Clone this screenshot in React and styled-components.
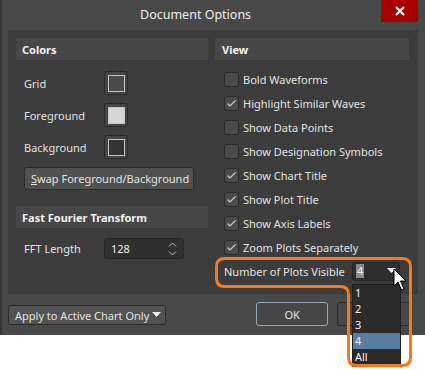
import React from "react";
import styled, { createGlobalStyle } from "styled-components";

const GlobalStyle = createGlobalStyle`
  body {
    margin: 0;
    background: #ffffff;
    font-family: "Noto Sans", "Open Sans", sans-serif;
    font-size: 11px;
    white-space: nowrap;
  }
`;

const Stage = styled.div`
  position: relative;
  width: 425px;
  height: 370px;
  overflow: hidden;
`;

const Dialog = styled.div`
  width: 425px;
  height: 335px;
  background: #484848;
  border-left: 2px solid #353535;
  box-sizing: border-box;
  color: #e2e2e2;
`;

const TitleBar = styled.div`
  height: 30px;
  display: flex;
  align-items: flex-start;
`;

const Title = styled.div`
  margin-left: 138px;
  margin-top: 6px;
  font-size: 12.5px;
  color: #ececec;
`;

const CloseButton = styled.div`
  margin-left: auto;
  margin-right: 7px;
  width: 37px;
  height: 22px;
  background: #a80000;
  display: flex;
  align-items: center;
  justify-content: center;
`;

const Body = styled.div`
  padding: 0 7px 0 6px;
`;

const Panel = styled.div`
  height: 264px;
  box-sizing: border-box;
  background: #3c3c3c;
  padding: 8px 7px 0 8px;
  display: grid;
  grid-template-columns: 192px 194px;
  column-gap: 7px;
  align-items: start;
`;

const Column = styled.div`
  display: flex;
  flex-direction: column;
`;

const GroupHeader = styled.div`
  height: 22px;
  background: #474747;
  display: flex;
  align-items: center;
  padding-left: ${(p) => p.$indent || 6}px;
  font-weight: bold;
  color: #f2f2f2;
  margin-top: ${(p) => p.$top || 0}px;
`;

const ColorRows = styled.div`
  display: flex;
  flex-direction: column;
  gap: 8px;
  padding: 11px 0 0 8px;
`;

const Row = styled.div`
  display: flex;
  align-items: center;
  height: 24px;
`;

const Label = styled.div`
  width: 80px;
`;

const Swatch = styled.div`
  width: 24px;
  height: 24px;
  box-sizing: border-box;
  border: 1px solid #2a2a2a;
  border-radius: 3px;
  background: #454545;
  display: flex;
  align-items: center;
  justify-content: center;
`;

const SwatchFill = styled.div`
  width: 17px;
  height: 17px;
  box-sizing: border-box;
  border: 1px solid #c4c4c4;
  background: ${(p) => p.$color};
`;

const Button = styled.div`
  height: 23px;
  box-sizing: border-box;
  border: 1px solid #2b2b2b;
  border-radius: 3px;
  background: #505050;
  display: flex;
  align-items: center;
  padding: 0 6px;
  width: ${(p) => p.$width}px;
`;

const Underline = styled.span`
  text-decoration: underline;
`;

const FftRow = styled.div`
  display: flex;
  align-items: center;
  padding: 10px 0 0 8px;
`;

const NumberInput = styled.div`
  width: 80px;
  height: 21px;
  box-sizing: border-box;
  border: 1px solid #262626;
  border-radius: 3px;
  background: #2f2f2f;
  display: flex;
  align-items: center;
  justify-content: space-between;
  padding: 0 6px 0 6px;
  color: #eeeeee;
`;

const CheckList = styled.div`
  display: flex;
  flex-direction: column;
  padding: 7px 0 0 9px;
`;

const Box = styled.div`
  width: 15px;
  height: 15px;
  box-sizing: border-box;
  border: 1px solid #2a2a2a;
  border-radius: 3px;
  background: #4a4a4a;
  margin-right: 4px;
  display: flex;
  align-items: center;
  justify-content: center;
`;

const PlotsLabel = styled.div`
  width: 128px;
`;

const SelectWrap = styled.div`
  position: relative;
`;

const Select = styled.div`
  width: 48px;
  height: 19px;
  box-sizing: border-box;
  border: 1px solid #262626;
  border-radius: 3px;
  background: #2e2e2e;
  display: flex;
  align-items: center;
  justify-content: space-between;
  padding: 0 3px 0 3px;
`;

const SelectedValue = styled.span`
  background: #8a8a8a;
  color: #f4f4f4;
  padding: 0 1px;
  line-height: 14px;
`;

const DropList = styled.div`
  position: absolute;
  top: 22px;
  left: 0;
  width: 49px;
  box-sizing: border-box;
  background: #2b2b2b;
  border: 1px solid #1e1e1e;
  padding: 0 0 1px;
  z-index: 3;
`;

const DropItem = styled.div`
  height: 16px;
  display: flex;
  align-items: center;
  line-height: 13px;
  padding-left: 2px;
  font-size: 11px;
  color: #f0f0f0;
  background: ${(p) => (p.$active ? "#5a7ea3" : "transparent")};
`;

const Footer = styled.div`
  display: flex;
  align-items: center;
  height: 40px;
  padding-right: 8px;
`;

const ApplyButton = styled(Button)`
  height: 20px;
  justify-content: space-between;
  background: #525252;
  padding: 0 4px 0 6px;
  margin-top: 2px;
`;

const DialogButton = styled.div`
  width: 74px;
  height: 24px;
  box-sizing: border-box;
  border: 1px solid ${(p) => (p.$focus ? "#8fa8bd" : "#2b2b2b")};
  border-radius: 3px;
  background: #474747;
  display: flex;
  align-items: center;
  justify-content: center;
  margin-left: ${(p) => p.$gap}px;
`;

const Overlay = styled.svg`
  position: absolute;
  left: 0;
  top: 0;
  pointer-events: none;
  z-index: 5;
`;

const Check = () => (
  <svg width="11" height="9" viewBox="0 0 11 9">
    <polyline points="1.5,4.5 4,7 9.5,1.5" fill="none" stroke="#cfcfcf" strokeWidth="1.2" />
  </svg>
);

const Triangle = () => (
  <svg width="9" height="6" viewBox="0 0 9 6">
    <polygon points="0,0 9,0 4.5,5" fill="#f4f4f4" />
  </svg>
);

const Spinner = () => (
  <svg width="9" height="14" viewBox="0 0 9 14">
    <polyline points="1,4.5 4.5,1 8,4.5" fill="none" stroke="#bdbdbd" strokeWidth="1" />
    <polyline points="1,9.5 4.5,13 8,9.5" fill="none" stroke="#bdbdbd" strokeWidth="1" />
  </svg>
);

const views = [
  ["Bold Waveforms", false],
  ["Highlight Similar Waves", true],
  ["Show Data Points", false],
  ["Show Designation Symbols", false],
  ["Show Chart Title", true],
  ["Show Plot Title", true],
  ["Show Axis Labels", true],
  ["Zoom Plots Separately", true],
];

const swatches = [
  ["Grid", "#4a4a4a"],
  ["Foreground", "#d6d6d6"],
  ["Background", "#333333"],
];

export default function App() {
  return (
    <Stage>
      <GlobalStyle />
      <Dialog>
        <TitleBar>
          <Title>Document Options</Title>
          <CloseButton>
            <svg width="10" height="10" viewBox="0 0 10 10">
              <path d="M1 1 L9 9 M9 1 L1 9" stroke="#ffffff" strokeWidth="2.2" />
            </svg>
          </CloseButton>
        </TitleBar>
        <Body>
          <Panel>
            <Column>
              <GroupHeader>Colors</GroupHeader>
              <ColorRows>
                {swatches.map(([name, color]) => (
                  <Row key={name}>
                    <Label>{name}</Label>
                    <Swatch>
                      <SwatchFill $color={color} />
                    </Swatch>
                  </Row>
                ))}
                <Button $width={170}>
                  <Underline>S</Underline>wap Foreground/Background
                </Button>
              </ColorRows>
              <GroupHeader $top={16}>Fast Fourier Transform</GroupHeader>
              <FftRow>
                <Label>FFT Length</Label>
                <NumberInput>
                  128
                  <Spinner />
                </NumberInput>
              </FftRow>
            </Column>
            <Column>
              <GroupHeader $indent={7}>View</GroupHeader>
              <CheckList>
                {views.map(([name, on]) => (
                  <Row key={name}>
                    <Box>{on && <Check />}</Box>
                    {name}
                  </Row>
                ))}
                <Row>
                  <PlotsLabel>Number of Plots Visible</PlotsLabel>
                  <SelectWrap>
                    <Select>
                      <SelectedValue>4</SelectedValue>
                      <Triangle />
                    </Select>
                    <DropList>
                      {["1", "2", "3", "4", "All"].map((v) => (
                        <DropItem key={v} $active={v === "4"}>
                          {v}
                        </DropItem>
                      ))}
                    </DropList>
                  </SelectWrap>
                </Row>
              </CheckList>
            </Column>
          </Panel>
          <Footer>
            <ApplyButton $width={161}>
              Apply to Active Chart Only
              <Triangle />
            </ApplyButton>
            <DialogButton $focus $gap={90}>OK</DialogButton>
            <DialogButton $gap={9}>Cancel</DialogButton>
          </Footer>
        </Body>
      </Dialog>
      <Overlay width="425" height="370" viewBox="0 0 425 370">
        <path
          d="M224.5 258.5 H402.5 Q410.5 258.5 410.5 266.5 V357.5 Q410.5 365.5 402.5 365.5 H356.5 Q348.5 365.5 348.5 357.5 V294.5 Q348.5 286.5 340.5 286.5 H224.5 Q216.5 286.5 216.5 278.5 V266.5 Q216.5 258.5 224.5 258.5 Z"
          fill="none"
          stroke="#f47a1f"
          strokeWidth="3"
        />
        <path
          d="M394 269 L394 286 L398 282 L401.5 290 L404 289 L400.5 281 L406 281 Z"
          fill="#ffffff"
          stroke="#000000"
          strokeWidth="1"
          strokeLinejoin="round"
        />
      </Overlay>
    </Stage>
  );
}
